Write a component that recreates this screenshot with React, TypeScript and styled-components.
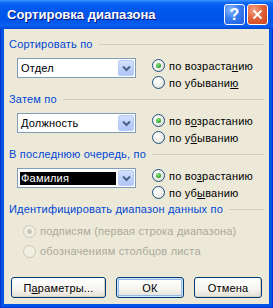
import styled, { createGlobalStyle } from "styled-components";

const GlobalStyle = createGlobalStyle`
  html, body {
    margin: 0;
    padding: 0;
    background: #fff;
  }
  body {
    font-family: "Liberation Sans", Arial, sans-serif;
    font-size: 11px;
    letter-spacing: 0.2px;
  }
  * {
    box-sizing: border-box;
  }
`;

const Window = styled.div`
  width: 273px;
  height: 308px;
  display: flex;
  flex-direction: column;
  background: #0055e5;
  box-shadow: inset 1px 0 0 #0831d9, inset -1px 0 0 #0831d9,
    inset 0 -1px 0 #0831d9;
`;

const TitleBar = styled.div`
  height: 29px;
  flex-shrink: 0;
  display: flex;
  align-items: center;
  padding: 0 5px 0 7px;
  background: linear-gradient(
    to bottom,
    #3d95ff 0%,
    #0a66f5 10%,
    #0058ee 30%,
    #0055ea 70%,
    #0a5ff0 88%,
    #0048d6 100%
  );
`;

const Title = styled.div`
  flex: 1;
  color: #fff;
  font-family: "Liberation Sans", Arial, sans-serif;
  font-weight: bold;
  font-size: 13px;
  letter-spacing: 0;
  text-shadow: 1px 1px 0 #0a1883;
  padding-bottom: 1px;
`;

const CaptionButton = styled.div<{ $close?: boolean }>`
  width: 21px;
  height: 21px;
  margin-left: 2px;
  border: 1px solid #fff;
  border-radius: 3px;
  display: flex;
  align-items: center;
  justify-content: center;
  color: #fff;
  font-weight: bold;
  font-size: 16px;
  letter-spacing: 0;
  background: ${(p) =>
    p.$close
      ? "radial-gradient(circle at 30% 25%, #f2a283 0%, #e2643a 45%, #c9431a 100%)"
      : "radial-gradient(circle at 30% 25%, #8db8ff 0%, #3a7cf0 45%, #1f5fdd 100%)"};
`;

const Body = styled.div`
  flex: 1;
  margin: 0 4px 4px;
  background: #ece9d8;
  padding: 9px 5px 6px;
  display: flex;
  flex-direction: column;
`;

const Section = styled.div`
  display: flex;
  flex-direction: column;
  height: 55px;
  flex-shrink: 0;
`;

const Legend = styled.div`
  display: flex;
  align-items: center;
  gap: 6px;
  height: 13px;
  line-height: 13px;
  color: #0046d5;
  white-space: nowrap;

  &::after {
    content: "";
    flex: 1;
    height: 1px;
    background: #d0d0bf;
  }
`;

const SortRow = styled.div`
  display: flex;
  align-items: flex-start;
  gap: 16px;
  margin-top: 6px;
  padding-left: 8px;
`;

const Combo = styled.div`
  width: 119px;
  height: 20px;
  border: 1px solid #7f9db9;
  background: #fff;
  display: flex;
  align-items: center;
  padding: 0 1px 0 2px;
  margin-top: 1px;
`;

const ComboText = styled.span<{ $selected?: boolean }>`
  flex: 1;
  height: 13px;
  line-height: 13px;
  padding-left: 1px;
  margin-right: 2px;
  color: ${(p) => (p.$selected ? "#fff" : "#000")};
  background: ${(p) => (p.$selected ? "#000" : "transparent")};
`;

const ComboArrow = styled.div`
  width: 16px;
  height: 16px;
  border: 1px solid #b9ccf3;
  border-radius: 2px;
  background: linear-gradient(to bottom, #d4e0fd 0%, #bfd1fb 50%, #b0c6f6 100%);
  display: flex;
  align-items: center;
  justify-content: center;
`;

const RadioColumn = styled.div<{ $rowHeight: number }>`
  display: flex;
  flex-direction: column;
  & > label {
    height: ${(p) => p.$rowHeight}px;
  }
`;

const RadioRow = styled.label<{ $disabled?: boolean }>`
  display: flex;
  align-items: center;
  gap: 4px;
  color: ${(p) => (p.$disabled ? "#aca899" : "#000")};
  white-space: nowrap;
`;

const RadioCircle = styled.span<{ $checked?: boolean; $disabled?: boolean }>`
  width: 13px;
  height: 13px;
  border-radius: 50%;
  flex-shrink: 0;
  border: 1px solid ${(p) => (p.$disabled ? "#cac8bb" : "#1c5180")};
  background: ${(p) =>
    p.$disabled
      ? "#f1efe2"
      : "radial-gradient(circle at 35% 35%, #ffffff 0%, #f4f3ee 45%, #d6d4c8 100%)"};
  display: flex;
  align-items: center;
  justify-content: center;

  &::after {
    content: "";
    display: ${(p) => (p.$checked ? "block" : "none")};
    width: 5px;
    height: 5px;
    border-radius: 50%;
    background: ${(p) =>
      p.$disabled
        ? "#cac8bb"
        : "radial-gradient(circle at 40% 35%, #8ee88a 0%, #21a121 70%, #1a8a1a 100%)"};
  }
`;

const IdentifyList = styled.div`
  margin-top: 5px;
  padding-left: 14px;
`;

const ButtonRow = styled.div`
  margin-top: auto;
  display: flex;
  gap: 10px;
  padding: 0 2px;
`;

const Button = styled.div<{ $width: number; $default?: boolean }>`
  width: ${(p) => p.$width}px;
  height: 21px;
  border: 1px solid #003c74;
  border-radius: 3px;
  display: flex;
  align-items: center;
  justify-content: center;
  color: #000;
  background: linear-gradient(to bottom, #ffffff 0%, #f5f4ef 60%, #e3e0d5 100%);
  box-shadow: ${(p) =>
    p.$default
      ? "inset 0 0 0 1px #cee7ff, inset 0 0 0 2px #98b8ea"
      : "inset -1px -1px 0 #d6d0c5"};
`;

const Chevron = () => (
  <svg width="9" height="7" viewBox="0 0 9 7">
    <path d="M1 1.5 L4.5 5 L8 1.5" fill="none" stroke="#4d6185" strokeWidth="2" />
  </svg>
);

const CloseIcon = () => (
  <svg width="11" height="11" viewBox="0 0 11 11">
    <path d="M1.5 1.5 L9.5 9.5 M9.5 1.5 L1.5 9.5" stroke="#fff" strokeWidth="2" />
  </svg>
);

interface ISortSection {
  legend: React.ReactNode;
  value: string;
  selected?: boolean;
  asc: React.ReactNode;
  desc: React.ReactNode;
}

const sections: ISortSection[] = [
  {
    legend: "Сортировать по",
    value: "Отдел",
    asc: (
      <>
        по возраста<u>н</u>ию
      </>
    ),
    desc: (
      <>
        по убывани<u>ю</u>
      </>
    ),
  },
  {
    legend: "Затем по",
    value: "Должность",
    asc: (
      <>
        по в<u>о</u>зрастанию
      </>
    ),
    desc: (
      <>
        по у<u>б</u>ыванию
      </>
    ),
  },
  {
    legend: "В последнюю очередь, по",
    value: "Фамилия",
    selected: true,
    asc: (
      <>
        по во<u>з</u>растанию
      </>
    ),
    desc: (
      <>
        по уб<u>ы</u>ванию
      </>
    ),
  },
];

const App = () => {
  return (
    <>
      <GlobalStyle />
      <Window>
        <TitleBar>
          <Title>Сортировка диапазона</Title>
          <CaptionButton>?</CaptionButton>
          <CaptionButton $close>
            <CloseIcon />
          </CaptionButton>
        </TitleBar>

        <Body>
          {sections.map((s, i) => (
            <Section key={i}>
              <Legend>{s.legend}</Legend>
              <SortRow>
                <Combo>
                  <ComboText $selected={s.selected}>{s.value}</ComboText>
                  <ComboArrow>
                    <Chevron />
                  </ComboArrow>
                </Combo>
                <RadioColumn $rowHeight={17}>
                  <RadioRow>
                    <RadioCircle $checked />
                    <span>{s.asc}</span>
                  </RadioRow>
                  <RadioRow>
                    <RadioCircle />
                    <span>{s.desc}</span>
                  </RadioRow>
                </RadioColumn>
              </SortRow>
            </Section>
          ))}

          {/* диапазон данных */}
          <Section>
            <Legend>Идентифицировать диапазон данных по</Legend>
            <IdentifyList>
              <RadioColumn $rowHeight={20}>
                <RadioRow $disabled>
                  <RadioCircle $checked $disabled />
                  <span>подписям (первая строка диапазона)</span>
                </RadioRow>
                <RadioRow $disabled>
                  <RadioCircle $disabled />
                  <span>обозначениям столбцов листа</span>
                </RadioRow>
              </RadioColumn>
            </IdentifyList>
          </Section>

          <ButtonRow>
            <Button $width={95}>
              <span>
                П<u>а</u>раметры...
              </span>
            </Button>
            <Button $width={68} $default>
              ОК
            </Button>
            <Button $width={68}>Отмена</Button>
          </ButtonRow>
        </Body>
      </Window>
    </>
  );
};

export default App;
